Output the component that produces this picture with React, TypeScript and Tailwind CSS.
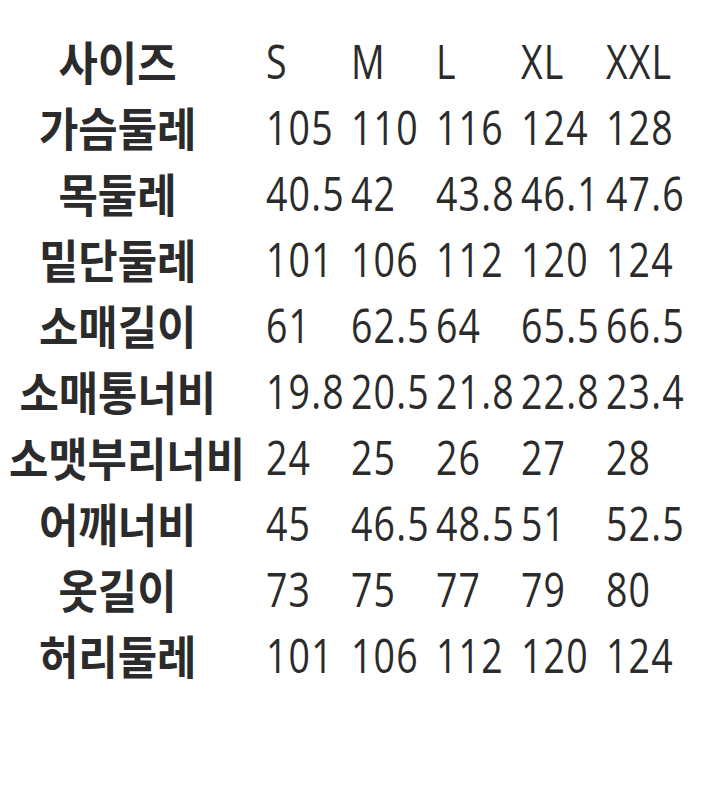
const sizes = ["S", "M", "L", "XL", "XXL"];

const rows: { label: string; values: string[] }[] = [
  { label: "가슴둘레", values: ["105", "110", "116", "124", "128"] },
  { label: "목둘레", values: ["40.5", "42", "43.8", "46.1", "47.6"] },
  { label: "밑단둘레", values: ["101", "106", "112", "120", "124"] },
  { label: "소매길이", values: ["61", "62.5", "64", "65.5", "66.5"] },
  { label: "소매통너비", values: ["19.8", "20.5", "21.8", "22.8", "23.4"] },
  { label: "소맷부리너비", values: ["24", "25", "26", "27", "28"] },
  { label: "어깨너비", values: ["45", "46.5", "48.5", "51", "52.5"] },
  { label: "옷길이", values: ["73", "75", "77", "79", "80"] },
  { label: "허리둘레", values: ["101", "106", "112", "120", "124"] },
];

function Row({ label, values }: { label: string; values: string[] }) {
  return (
    <div className="flex h-[66px] items-center leading-[66px]">
      <div className="w-[235px] shrink-0 text-center whitespace-nowrap">
        <span className="inline-block scale-x-[0.93] font-bold text-[46px] font-['Noto_Sans_CJK_KR',sans-serif]">
          {label}
        </span>
      </div>
      <div className="flex pl-[31px]">
        {values.map((v, i) => (
          <div key={i} className="w-[85px] shrink-0 whitespace-nowrap">
            <span className="inline-block origin-left scale-x-[0.78] tracking-[1.5px] font-[370] text-[48px] font-['Open_Sans',sans-serif]">
              {v}
            </span>
          </div>
        ))}
      </div>
    </div>
  );
}

export default function App() {
  return (
    <div className="w-[722px] h-[785px] bg-white overflow-hidden pt-[34px] text-[#2b2b2b]">
      <Row label="사이즈" values={sizes} />
      {rows.map((r) => (
        <Row key={r.label} label={r.label} values={r.values} />
      ))}
    </div>
  );
}
